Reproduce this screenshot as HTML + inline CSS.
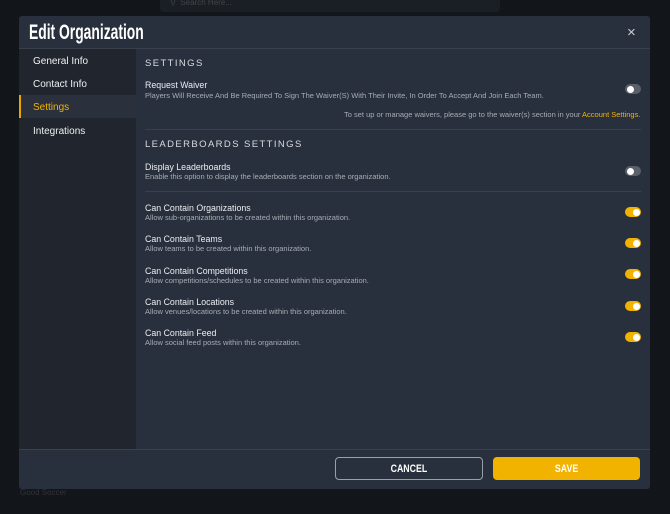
<!DOCTYPE html><html><head><style>
*{margin:0;padding:0;box-sizing:border-box}
body{width:670px;height:514px;background:#12161b;font-family:"Liberation Sans",sans-serif;position:relative;overflow:hidden;color:#e6e8ea}
.a{position:absolute;white-space:nowrap}
.m{position:absolute;left:19px;top:16px;width:631px;height:473px;background:#29303d;border-radius:3px}
.t{font-size:8.8px;color:#eceef0;margin-top:1px}
.d{font-size:7.5px;color:#a7acb3}
.tg{position:absolute;left:625px;width:16px;height:10px;border-radius:5px;background:#5a606a}
.tg::after{content:"";position:absolute;left:1.5px;top:1.5px;width:7px;height:7px;border-radius:50%;background:#fff}
.tg.on{background:#f2b200}.tg.on::after{left:7.5px}
.nav{font-size:10px;color:#eef0f2;left:33px;margin-top:2px}
</style></head><body>
<div class="a" style="left:160px;top:0;width:340px;height:12px;background:#1a1f26;border-radius:0 0 4px 4px"></div>
<div class="a" style="left:170px;top:-2px;font-size:8px;color:#444">&#9906; &nbsp;Search Here...</div>
<div class="a" style="left:20px;top:488px;font-size:8px;color:#333">Good Soccer</div>
<div class="m"></div>
<div class="a" style="left:19px;top:48px;width:631px;height:1px;background:#3a414d"></div>
<div class="a" style="left:19px;top:49px;width:117px;height:400px;background:#21262e"></div>
<div class="a" style="left:19px;top:95px;width:117px;height:23px;background:#2b313c"></div>
<div class="a" style="left:19px;top:95px;width:2px;height:23px;background:#e6a800"></div>
<div class="a" style="left:29px;top:21px;font-size:21px;font-weight:bold;color:#fff;transform:scaleX(.66);transform-origin:left">Edit Organization</div>
<div class="a" style="left:627px;top:24px;font-size:15px;color:#ccc">&#215;</div>
<div class="a nav" style="top:54px">General Info</div>
<div class="a nav" style="top:77px">Contact Info</div>
<div class="a nav" style="top:100px;color:#f2b200">Settings</div>
<div class="a nav" style="top:124px">Integrations</div>
<div class="a" style="left:145px;top:58px;font-size:9.5px;letter-spacing:1.4px;color:#d8dbe0">SETTINGS</div>
<div class="a t" style="left:145px;top:79px">Request Waiver</div>
<div class="a d" style="left:145px;top:91px">Players Will Receive And Be Required To Sign The Waiver(S) With Their Invite, In Order To Accept And Join Each Team.</div>
<div class="a d" style="left:344px;top:110px">To set up or manage waivers, please go to the waiver(s) section in your <span style="color:#f2b200">Account Settings.</span></div>
<div class="a" style="left:145px;top:129px;width:496px;height:1px;background:#3a414d"></div>
<div class="a" style="left:145px;top:139px;font-size:9.5px;letter-spacing:1.4px;color:#d8dbe0">LEADERBOARDS SETTINGS</div>
<div class="a t" style="left:145px;top:161px">Display Leaderboards</div>
<div class="a d" style="left:145px;top:172px">Enable this option to display the leaderboards section on the organization.</div>
<div class="a" style="left:145px;top:191px;width:496px;height:1px;background:#3a414d"></div>
<div class="a t" style="left:145px;top:202px">Can Contain Organizations</div>
<div class="a d" style="left:145px;top:213px">Allow sub-organizations to be created within this organization.</div>
<div class="a t" style="left:145px;top:233px">Can Contain Teams</div>
<div class="a d" style="left:145px;top:244px">Allow teams to be created within this organization.</div>
<div class="a t" style="left:145px;top:265px">Can Contain Competitions</div>
<div class="a d" style="left:145px;top:276px">Allow competitions/schedules to be created within this organization.</div>
<div class="a t" style="left:145px;top:296px">Can Contain Locations</div>
<div class="a d" style="left:145px;top:307px">Allow venues/locations to be created within this organization.</div>
<div class="a t" style="left:145px;top:327px">Can Contain Feed</div>
<div class="a d" style="left:145px;top:338px">Allow social feed posts within this organization.</div>
<div class="tg" style="top:84px"></div>
<div class="tg" style="top:166px"></div>
<div class="tg on" style="top:207px"></div>
<div class="tg on" style="top:238px"></div>
<div class="tg on" style="top:269px"></div>
<div class="tg on" style="top:301px"></div>
<div class="tg on" style="top:332px"></div>
<div class="a" style="left:19px;top:449px;width:631px;height:1px;background:#3a414d"></div>
<div class="a" style="left:335px;top:457px;width:148px;height:23px;border:1px solid #9aa0a8;border-radius:4px;text-align:center;line-height:22px;font-size:11px;font-weight:bold;color:#fff"><span style="display:inline-block;transform:scaleX(.8)">CANCEL</span></div>
<div class="a" style="left:493px;top:457px;width:147px;height:23px;background:#f2b200;border-radius:4px;text-align:center;line-height:24px;font-size:11px;font-weight:bold;color:#fff"><span style="display:inline-block;transform:scaleX(.8)">SAVE</span></div>
</body></html>
